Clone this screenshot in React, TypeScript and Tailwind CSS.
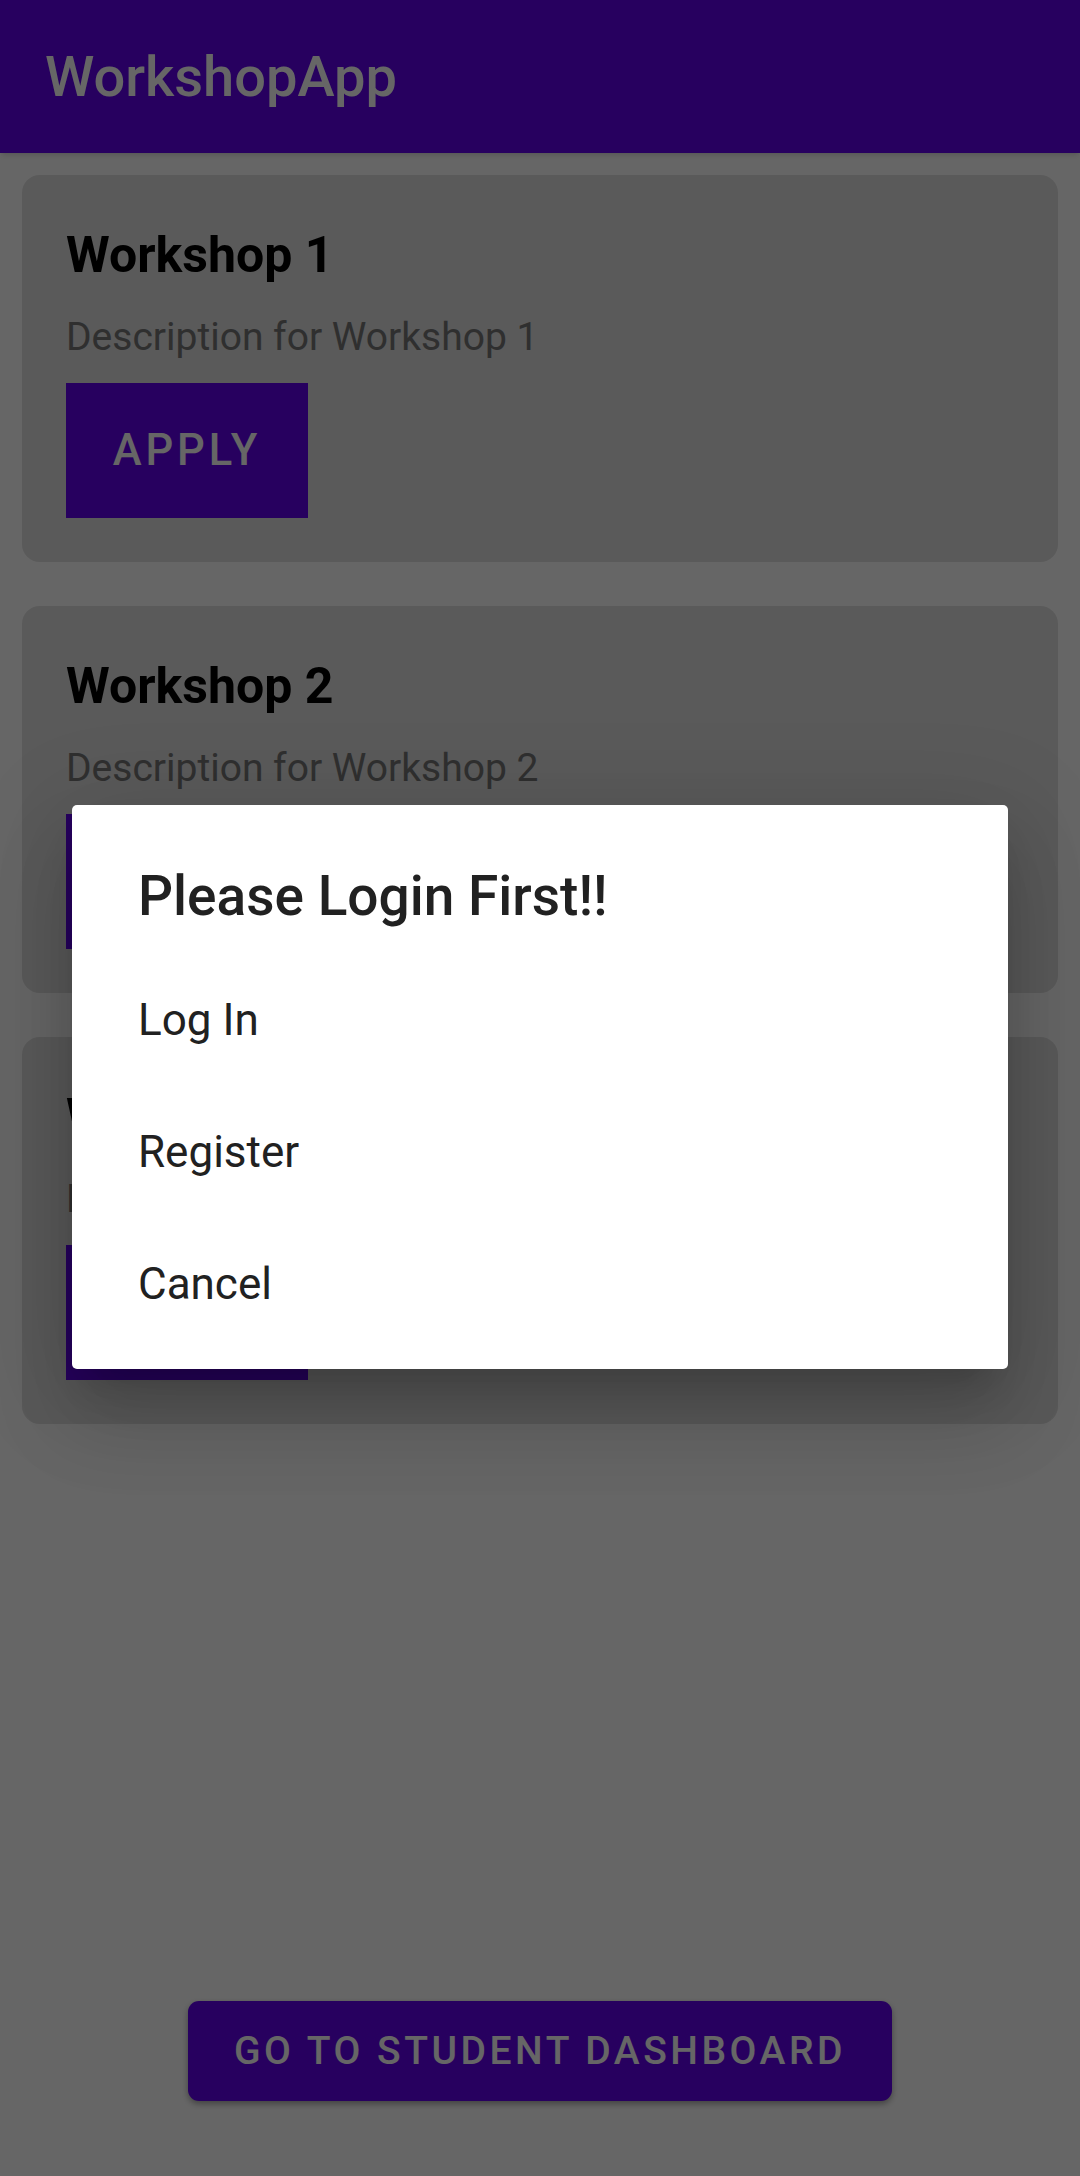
import React from 'react';

const workshops = [
  { id: 1, title: 'Workshop 1', description: 'Description for Workshop 1' },
  { id: 2, title: 'Workshop 2', description: 'Description for Workshop 2' },
  { id: 3, title: 'Workshop 3', description: 'Description for Workshop 3' },
];

function WorkshopCard({ title, description }: { title: string; description: string }) {
  return (
    <div className="mx-[22px] rounded-[18px] bg-[#e0e0e0] px-[44px] pt-[50px] pb-[44px]">
      <h2 className="text-[50px] leading-[60px] font-bold text-black">{title}</h2>
      <p className="mt-[29px] text-[39px] leading-[46px] text-[#757575]">{description}</p>
      <button className="mt-[23px] flex h-[135px] w-[242px] items-center justify-center bg-[#6200ee] text-[43.5px] font-medium tracking-[0.09em] text-white">
        APPLY
      </button>
    </div>
  );
}

export default function App() {
  const options = ['Log In', 'Register', 'Cancel'];

  return (
    <div
      className="relative flex h-[2176px] w-full flex-col overflow-hidden bg-white"
      style={{ fontFamily: 'Roboto, "Noto Sans", sans-serif' }}
    >
      {/* App bar */}
      <div className="flex h-[153px] shrink-0 items-center bg-[#6200ee] pl-[45px] shadow-md">
        <span className="text-[56px] font-medium text-white">WorkshopApp</span>
      </div>

      {/* Workshop list */}
      <div className="mt-[22px] flex flex-col gap-[44px]">
        {workshops.map((w) => (
          <WorkshopCard key={w.id} title={w.title} description={w.description} />
        ))}
      </div>

      {/* Bottom action */}
      <div className="mt-auto mb-[75px] flex justify-center">
        <button className="flex h-[100px] w-[704px] items-center justify-center rounded-[11px] bg-[#6200ee] text-[39px] font-medium tracking-[0.09em] text-white shadow-[0_3px_6px_rgba(0,0,0,0.35)]">
          GO TO STUDENT DASHBOARD
        </button>
      </div>

      {/* Scrim */}
      <div className="absolute inset-0 bg-black/60" />

      {/* Dialog */}
      <div className="absolute top-[805px] left-[72px] flex h-[564px] w-[936px] flex-col rounded-[5px] bg-white pt-[59px] shadow-[0_50px_80px_6px_rgba(0,0,0,0.12),0_20px_100px_16px_rgba(0,0,0,0.1),0_26px_36px_-16px_rgba(0,0,0,0.18)]">
        <h3 className="px-[66px] text-[55px] leading-[64px] font-medium text-[#212121]">Please Login First!!</h3>
        <ul className="mt-[26px]">
          {options.map((opt) => (
            <li key={opt} className="h-[132px] px-[66px] text-[44px] leading-[132px] text-[#212121]">
              {opt}
            </li>
          ))}
        </ul>
      </div>
    </div>
  );
}
